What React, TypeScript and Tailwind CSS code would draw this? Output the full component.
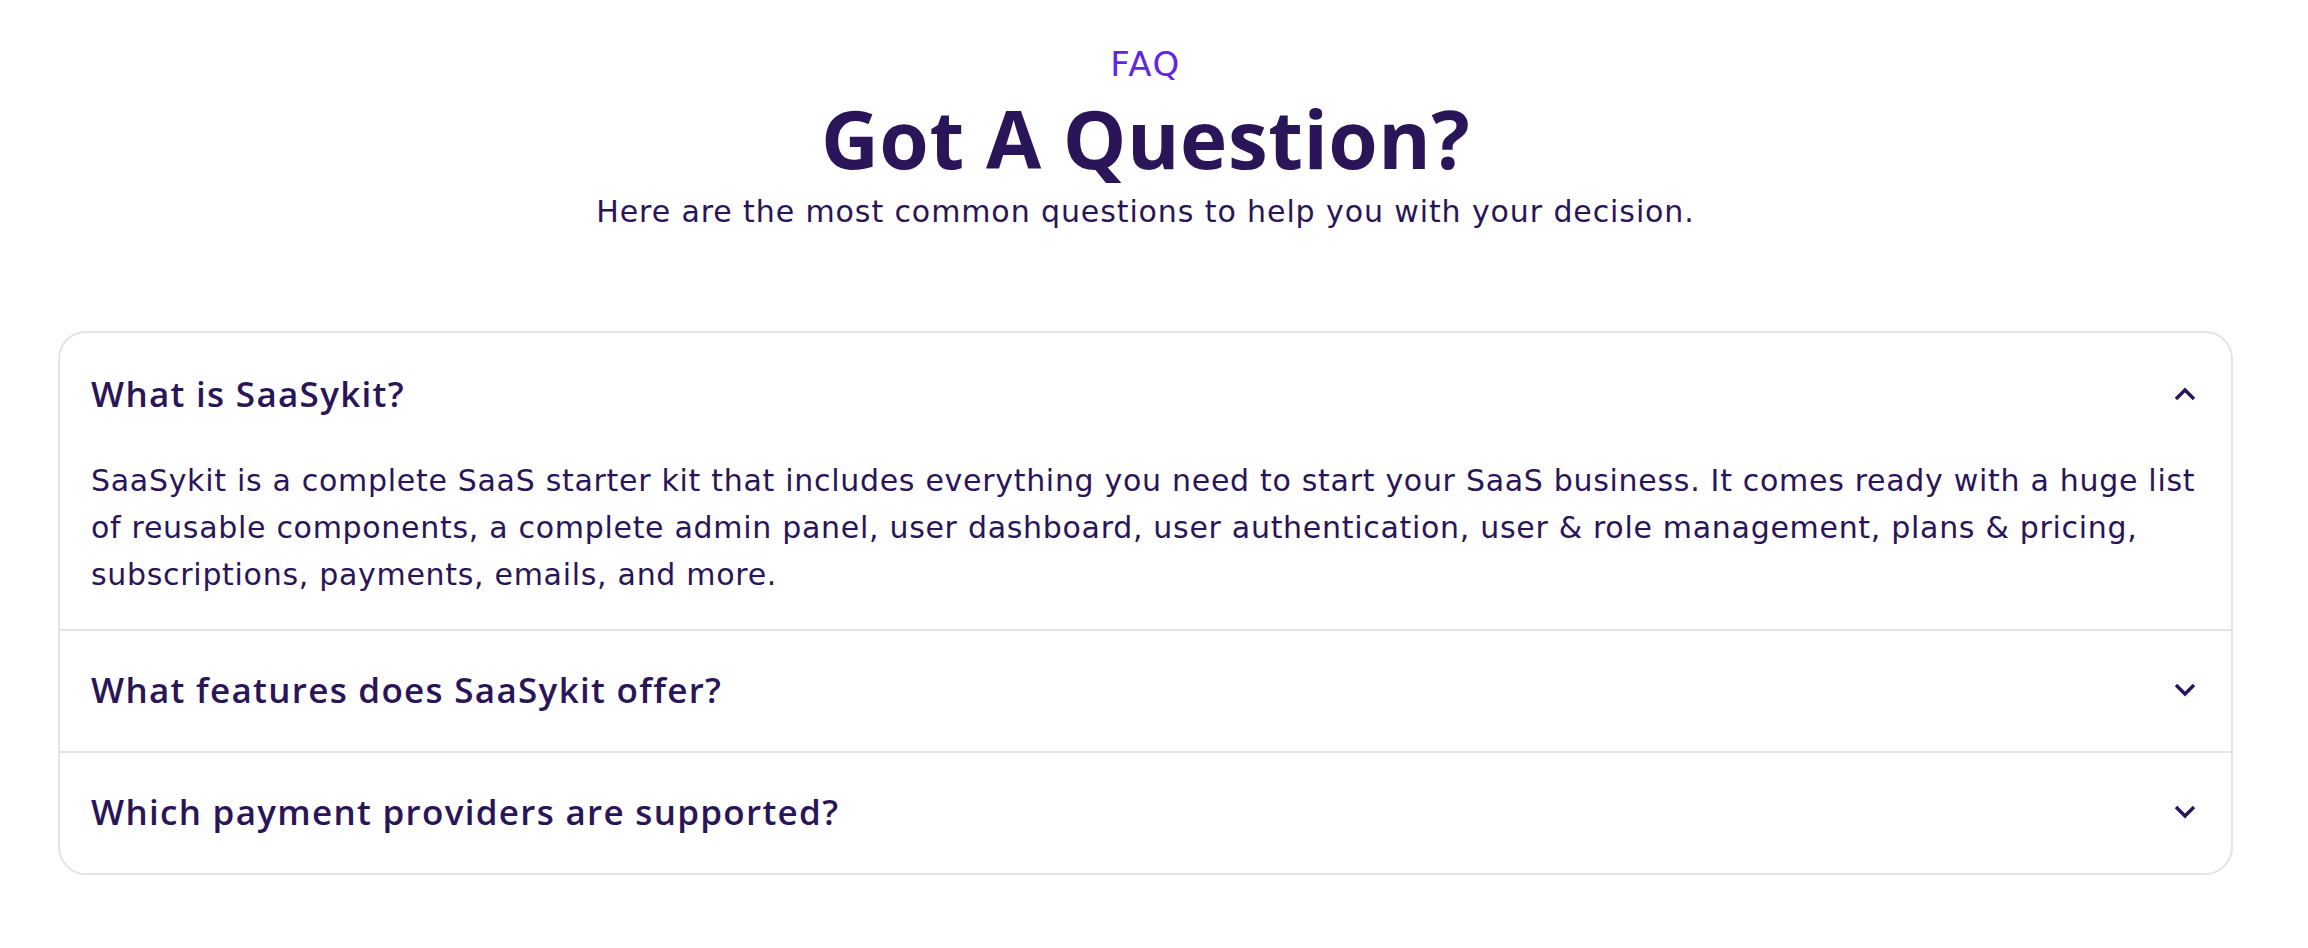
const faqs = [
  {
    q: "What is SaaSykit?",
    a: [
      "SaaSykit is a complete SaaS starter kit that includes everything you need to start your SaaS business. It comes ready with a huge list",
      "of reusable components, a complete admin panel, user dashboard, user authentication, user & role management, plans & pricing,",
      "subscriptions, payments, emails, and more.",
    ],
    open: true,
  },
  { q: "What features does SaaSykit offer?", a: [], open: false },
  { q: "Which payment providers are supported?", a: [], open: false },
];

const body = { fontFamily: '"DejaVu Sans", sans-serif' };
const heading = { fontFamily: '"Open Sans", sans-serif' };

const Chevron = ({ up }: { up: boolean }) => (
  <svg width="22" height="14" viewBox="0 0 22 14" className="shrink-0">
    <polyline
      points={up ? "2,12 11,3 20,12" : "2,2 11,11 20,2"}
      fill="none"
      stroke="#2a1558"
      strokeWidth="3.4"
    />
  </svg>
);

export default function App() {
  return (
    <div className="min-h-screen bg-white pl-[58px] pr-[75px] pt-[41px] pb-10 text-[#2a1558]" style={body}>
      <div className="flex flex-col items-center">
        <p className="text-[34px] leading-[47px] tracking-[1.5px] text-[#5f26e6]">FAQ</p>
        <h2 className="mt-[6px] text-[80px] font-bold leading-[88px] tracking-[0.5px]" style={heading}>
          Got A Question?
        </h2>
        <p className="mt-[6px] text-[30px] leading-[47px] tracking-[0.9px]">
          Here are the most common questions to help you with your decision.
        </p>
      </div>

      <div className="mt-[96px] rounded-[28px] border-2 border-[#e4e4e6]">
        {faqs.map((item, i) => (
          <div key={i} className={i > 0 ? "border-t-2 border-[#e4e4e6]" : ""}>
            <div
              className={
                "flex items-center justify-between pl-[31px] pr-[35px] " +
                (item.open ? "pt-[38px] pb-0" : "pt-[36px] pb-[38px]")
              }
            >
              <h3 className="text-[35px] font-semibold leading-[46px] tracking-[1.3px]" style={heading}>
                {item.q}
              </h3>
              <Chevron up={item.open} />
            </div>
            {item.open && (
              <p className="mt-[40px] pb-[31px] pl-[31px] pr-[10px] text-[30px] leading-[47px] tracking-[0.7px] whitespace-nowrap">
                {item.a.map((line, j) => (
                  <span key={j}>
                    {line}
                    {j < item.a.length - 1 && <br />}
                  </span>
                ))}
              </p>
            )}
          </div>
        ))}
      </div>
    </div>
  );
}
